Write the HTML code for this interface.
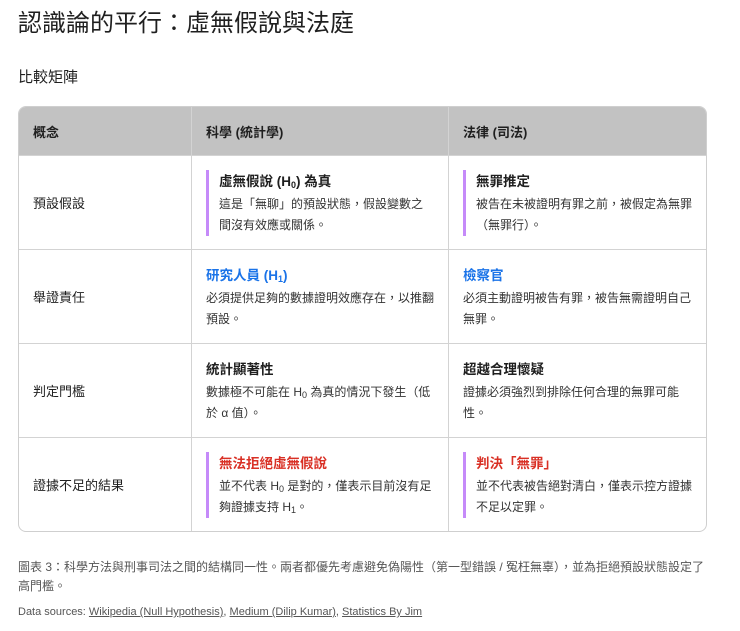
<!DOCTYPE html>
<html><head><meta charset="utf-8"><style>
body{margin:0;background:#fff;font-family:"Liberation Sans","Noto Sans CJK TC",sans-serif;color:#1f1f1f;width:740px;height:631px;overflow:hidden;position:relative}
h1{position:absolute;left:18px;top:7px;margin:0;font-size:24px;font-weight:400;line-height:34px}
h2{position:absolute;left:18px;top:68px;margin:0;font-size:15px;font-weight:400;line-height:20px}
table{position:absolute;left:18px;top:106px;width:689px;border-collapse:separate;border-spacing:0;border:1px solid #cfcfcf;border-radius:8px;overflow:hidden}
th{background:#c2c2c2;height:48px;text-align:left;padding:0 0 0 14px;font-size:13px;font-weight:700}
td{border-top:1px solid #d3d3d3;height:93px;padding:0 14px;font-size:13px;vertical-align:middle}
td+td,th+th{border-left:1px solid #d3d3d3}
.b{border-left:3px solid #c58af9;padding-left:10px}
.t{font-weight:700;font-size:13.5px;line-height:24px}
.d{font-size:12px;line-height:21px;color:#333}
sub{font-size:9px;line-height:0;vertical-align:-2px}
.blue{color:#1a73e8}.red{color:#d93025}
.cap{position:absolute;left:18px;top:558px;width:694px;font-size:12px;line-height:19px;color:#555}
.src{position:absolute;left:18px;top:606px;font-size:11px;color:#555}
.src a{color:#555;text-decoration:underline}
</style></head><body>
<h1>認識論的平行：虛無假說與法庭</h1>
<h2>比較矩陣</h2>
<table>
<tr><th style="width:158px">概念</th><th style="width:242px">科學 (統計學)</th><th>法律 (司法)</th></tr>
<tr><td>預設假設</td><td><div class="b"><div class="t">虛無假說 (H<sub>0</sub>) 為真</div><div class="d">這是「無聊」的預設狀態，假設變數之間沒有效應或關係。</div></div></td><td><div class="b"><div class="t">無罪推定</div><div class="d">被告在未被證明有罪之前，被假定為無罪（無罪行）。</div></div></td></tr>
<tr><td>舉證責任</td><td><div class="t blue">研究人員 (H<sub>1</sub>)</div><div class="d">必須提供足夠的數據證明效應存在，以推翻預設。</div></td><td><div class="t blue">檢察官</div><div class="d">必須主動證明被告有罪，被告無需證明自己無罪。</div></td></tr>
<tr><td>判定門檻</td><td><div class="t">統計顯著性</div><div class="d">數據極不可能在 H<sub>0</sub> 為真的情況下發生（低於 α 值）。</div></td><td><div class="t">超越合理懷疑</div><div class="d">證據必須強烈到排除任何合理的無罪可能性。</div></td></tr>
<tr><td>證據不足的結果</td><td><div class="b"><div class="t red">無法拒絕虛無假說</div><div class="d">並不代表 H<sub>0</sub> 是對的，僅表示目前沒有足夠證據支持 H<sub>1</sub>。</div></div></td><td><div class="b"><div class="t red">判決「無罪」</div><div class="d">並不代表被告絕對清白，僅表示控方證據不足以定罪。</div></div></td></tr>
</table>
<div class="cap">圖表 3：科學方法與刑事司法之間的結構同一性。兩者都優先考慮避免偽陽性（第一型錯誤 / 冤枉無辜），並為拒絕預設狀態設定了<br>高門檻。</div>
<div class="src">Data sources: <a>Wikipedia (Null Hypothesis)</a>, <a>Medium (Dilip Kumar)</a>, <a>Statistics By Jim</a></div>
</body></html>
